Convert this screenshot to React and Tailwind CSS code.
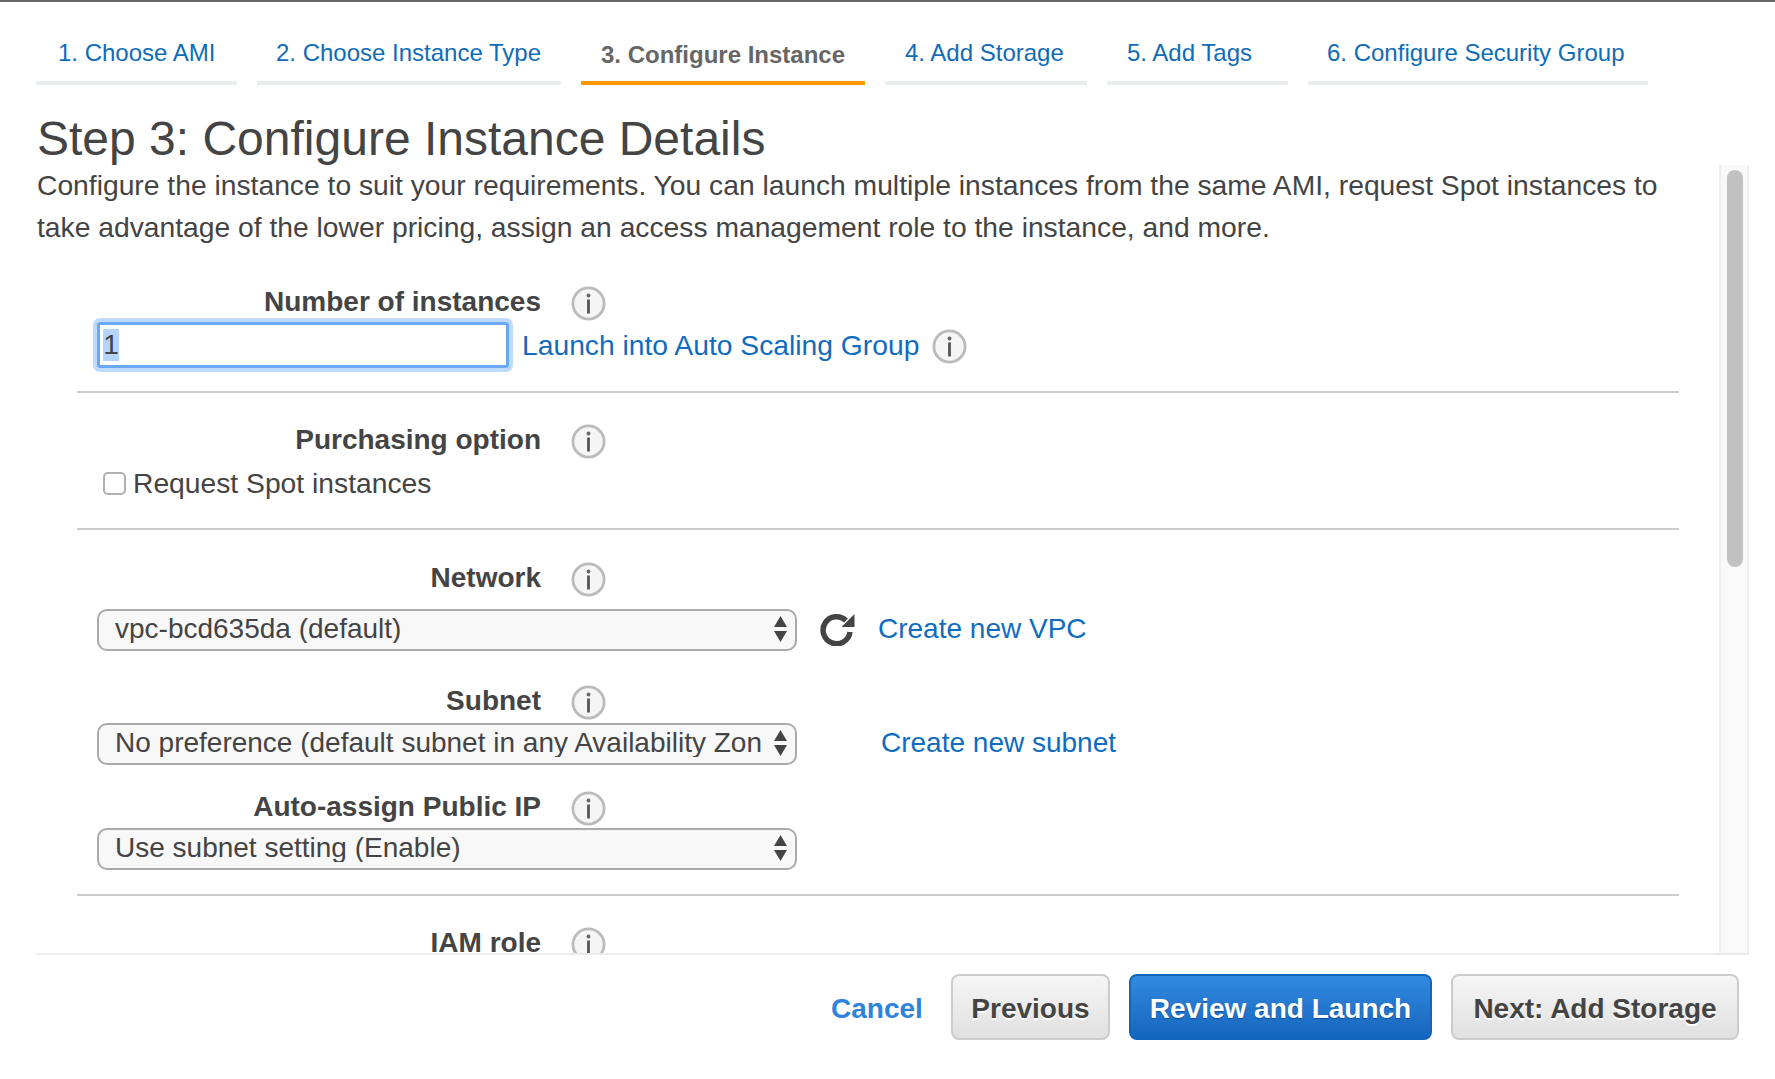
import React from 'react'

const TABS = [
  { label: '1. Choose AMI', w: 'w-[201px]', pl: 'pl-[22px]' },
  { label: '2. Choose Instance Type', w: 'w-[304px]', pl: 'pl-[19px]' },
  { label: '3. Configure Instance', w: 'w-[284px]', pl: 'pl-[20px]', active: true },
  { label: '4. Add Storage', w: 'w-[202px]', pl: 'pl-[20px]' },
  { label: '5. Add Tags', w: 'w-[181px]', pl: 'pl-[20px]' },
  { label: '6. Configure Security Group', w: 'w-[340px]', pl: 'pl-[19px]' },
]

function InfoIcon() {
  return (
    <svg width="35" height="35" viewBox="0 0 35 35" className="shrink-0">
      <circle cx="17.5" cy="17.5" r="15.6" fill="#f5f5f5" stroke="#bbbbbb" strokeWidth="2.8" />
      <circle cx="17.5" cy="9.5" r="1.9" fill="#666" />
      <rect x="16.1" y="13.5" width="2.8" height="14" fill="#555" />
    </svg>
  )
}

function RefreshIcon() {
  return (
    <svg width="36" height="34" viewBox="0 0 36 34" className="shrink-0">
      <path d="M27 8.5 A13.5 13.5 0 1 0 31 20" fill="none" stroke="#444" strokeWidth="5.5" />
      <path d="M35.5 2 V15 H22.5 Z" fill="#444" />
    </svg>
  )
}

function SelectArrows() {
  return (
    <svg width="13" height="26" viewBox="0 0 13 26" className="absolute right-[10px] top-[7px]">
      <path d="M6.5 0 L13 11 H0 Z" fill="#444" />
      <path d="M0 15 H13 L6.5 26 Z" fill="#444" />
    </svg>
  )
}

function FieldLabel({ children, className = '' }) {
  return (
    <div className={`flex h-[35px] items-center ${className}`}>
      <div className="w-[505px] pb-[3px] text-right text-[28px] font-bold text-[#444]">{children}</div>
      <div className="ml-[30px]"><InfoIcon /></div>
    </div>
  )
}

function SelectBox({ value }) {
  return (
    <div className="relative h-[42px] w-[700px]">
      <select
        defaultValue={value}
        className="h-full w-full appearance-none rounded-[10px] border-2 border-[#aaaaaa] bg-[#f8f8f8] pb-[2px] pl-[16px] pr-[32px] text-[28px] text-[#444] outline-none"
      >
        <option>{value}</option>
      </select>
      <SelectArrows />
    </div>
  )
}

function Divider({ className = '' }) {
  return <div className={`ml-[41px] h-[2px] w-[1602px] bg-[#cccccc] ${className}`} />
}

function GrayButton({ children, className = '' }) {
  return (
    <button className={`h-[66px] rounded-[8px] border-2 border-[#cccccc] bg-gradient-to-b from-[#f6f6f6] to-[#e0e0e0] pt-[3px] text-[28px] font-bold text-[#444] [text-shadow:0_2px_0_#ffffff] ${className}`}>
      {children}
    </button>
  )
}

export default function App() {
  return (
    <div className="flex h-[1079px] w-full flex-col overflow-hidden border-t-2 border-[#666666] bg-white font-['Liberation_Sans',Arial,sans-serif] leading-none">
      {/* Wizard tabs */}
      <div className="ml-[36px] mt-[20px] flex gap-5">
        {TABS.map(t => (
          <div
            key={t.label}
            className={`${t.w} ${t.pl} h-[63px] border-b-4 text-[24px] ${t.active ? 'border-[#ff9900] pt-[21px] font-bold text-[#666666]' : 'border-[#eaeded] pt-[19px] text-[#0f6cb8]'}`}
          >
            {t.label}
          </div>
        ))}
      </div>

      <h1 className="ml-[37px] mt-[28px] h-[52px] text-[48px] font-normal leading-[52px] text-[#444]">
        Step 3: Configure Instance Details
      </h1>

      {/* Scrollable panel */}
      <div className="ml-[36px] flex h-[790px] w-[1713px] shrink-0 border-b-2 border-[#eaeded]">
        <div className="min-w-0 flex-1 overflow-hidden">
          <p className="-mt-px pl-[1px] text-[28.25px] leading-[42px] text-[#444]">
            Configure the instance to suit your requirements. You can launch multiple instances from the same AMI, request Spot instances to
            <br />
            take advantage of the lower pricing, assign an access management role to the instance, and more.
          </p>

          <FieldLabel className="mt-[38px]">Number of instances</FieldLabel>
          <div className="mt-px flex items-center pl-[61px]">
            <div className="flex h-[46px] w-[412px] items-center rounded-[3px] border-[3px] border-[#6aa9f8] pl-[3px] shadow-[0_0_0_4px_#bedafd]">
              <span className="flex h-[32px] w-[16px] items-center justify-center bg-[#b3d4fc] text-[28px] text-[#444]">1</span>
            </div>
            <a className="ml-[13px] text-[28.25px] text-[#0f6cc0]">Launch into Auto Scaling Group</a>
            <div className="ml-[13px] mt-[2px]"><InfoIcon /></div>
          </div>
          <Divider className="mt-[23px]" />

          <FieldLabel className="mt-[31px]">Purchasing option</FieldLabel>
          <div className="mt-[9px] flex h-[30px] items-center pl-[67px]">
            <div className="h-[23px] w-[23px] rounded-[5px] border-2 border-[#b0b0b0] bg-white" />
            <span className="ml-[7px] text-[28.25px] text-[#444]">Request Spot instances</span>
          </div>
          <Divider className="mt-[30px]" />

          <FieldLabel className="mt-[32px]">Network</FieldLabel>
          <div className="mt-[12px] flex items-center pl-[61px]">
            <SelectBox value="vpc-bcd635da (default)" />
            <div className="ml-[22px] mb-[2px]"><RefreshIcon /></div>
            <a className="ml-[23px] pb-[2px] text-[28px] text-[#0f6cc0]">Create new VPC</a>
          </div>

          <FieldLabel className="mt-[34px]">Subnet</FieldLabel>
          <div className="mt-[3px] flex items-center pl-[61px]">
            <SelectBox value="No preference (default subnet in any Availability Zone)" />
            <a className="ml-[84px] pb-[2px] text-[28px] text-[#0f6cc0]">Create new subnet</a>
          </div>

          <FieldLabel className="mt-[26px]">Auto-assign Public IP</FieldLabel>
          <div className="mt-[2px] flex items-center pl-[61px]">
            <SelectBox value="Use subnet setting (Enable)" />
          </div>
          <Divider className="mt-[24px]" />

          <FieldLabel className="mt-[31px]">IAM role</FieldLabel>
        </div>

        {/* Scrollbar */}
        <div className="w-[30px] shrink-0 border-x-2 border-[#eeeeee] bg-[#f9f9f9] px-[6px] pt-[5px]">
          <div className="h-[397px] w-[16px] rounded-full bg-[#c1c1c1]" />
        </div>
      </div>

      {/* Footer actions */}
      <div className="mt-[19px] flex items-center">
        <a className="ml-[831px] w-[120px] pt-[3px] text-[28px] font-bold text-[#2e83dc]">Cancel</a>
        <GrayButton className="w-[159px]">Previous</GrayButton>
        <button className="ml-[19px] h-[66px] w-[303px] rounded-[8px] border-2 border-[#1166bb] bg-gradient-to-b from-[#3389e0] to-[#1566bd] pt-[3px] text-[28px] font-bold text-white [text-shadow:0_1px_1px_#0b4c94]">
          Review and Launch
        </button>
        <GrayButton className="ml-[19px] w-[288px]">Next: Add Storage</GrayButton>
      </div>
    </div>
  )
}
